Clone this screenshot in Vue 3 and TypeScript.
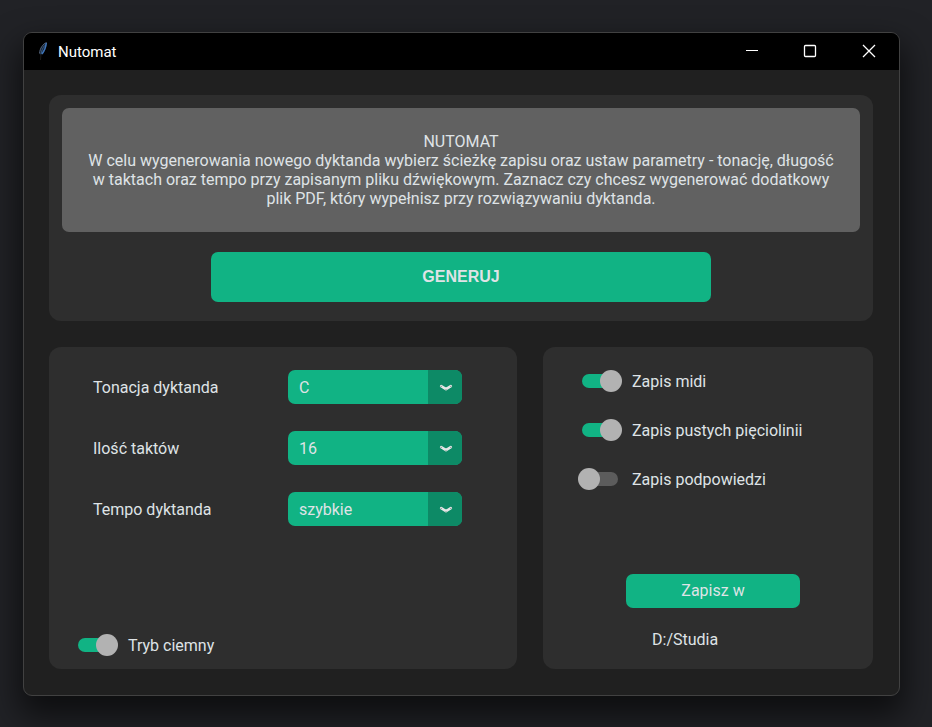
<script setup lang="ts">
import { reactive, ref } from 'vue'

interface Picker {
  id: string
  label: string
  value: string
  options: string[]
}

interface Toggle {
  id: string
  label: string
  on: boolean
}

const pickers = reactive<Picker[]>([
  { id: 'key', label: 'Tonacja dyktanda', value: 'C', options: ['C', 'G', 'D', 'F'] },
  { id: 'bars', label: 'Ilość taktów', value: '16', options: ['8', '16', '32'] },
  { id: 'tempo', label: 'Tempo dyktanda', value: 'szybkie', options: ['wolne', 'średnie', 'szybkie'] },
])

const toggles = reactive<Toggle[]>([
  { id: 'midi', label: 'Zapis midi', on: true },
  { id: 'staves', label: 'Zapis pustych pięciolinii', on: true },
  { id: 'hints', label: 'Zapis podpowiedzi', on: false },
])

const dark = ref(true)
const path = ref('D:/Studia')
</script>

<template>
  <div class="desktop">
    <main class="window">
      <header class="titlebar">
        <svg class="feather" viewBox="0 0 16 20" aria-hidden="true">
          <path d="M11 1C7.500 2.500 4 6 3.500 10.500L4 14.500C8 12.500 10.500 8 11 1Z" fill="#14202f" />
          <path d="M10.500 1.500C7 3 4 7 3.500 12.500" fill="none" stroke="#56647a" stroke-width="1" />
          <path d="M10.300 2C9.800 6.500 8 10.500 6 13" fill="none" stroke="#3f74b8" stroke-width="1.500" />
          <path d="M8.500 4.500C6.500 7.500 5.500 10 5 13" fill="none" stroke="#456f9f" stroke-width="0.800" />
          <path d="M5 13L4.500 19" fill="none" stroke="#1c1c1c" stroke-width="1" />
        </svg>
        <h1 class="title">Nutomat</h1>
        <div class="controls">
          <button class="control" type="button" aria-label="Minimalizuj">
            <svg viewBox="0 0 14 14"><path d="M1 6.500H13" /></svg>
          </button>
          <button class="control" type="button" aria-label="Maksymalizuj">
            <svg viewBox="0 0 14 14"><rect x="1.500" y="1.500" width="11" height="11" rx="1" stroke-width="1.300" /></svg>
          </button>
          <button class="control" type="button" aria-label="Zamknij">
            <svg viewBox="0 0 14 14"><path d="M2 1L14 13M14 1L2 13" stroke-width="1.300" /></svg>
          </button>
        </div>
      </header>

      <div class="content">
        <section class="panel intro">
          <div class="message">
            <p>NUTOMAT</p>
            <p>
              W celu wygenerowania nowego dyktanda wybierz ścieżkę zapisu oraz ustaw parametry - tonację, długość
              w taktach oraz tempo przy zapisanym pliku dźwiękowym. Zaznacz czy chcesz wygenerować dodatkowy
              plik PDF, który wypełnisz przy rozwiązywaniu dyktanda.
            </p>
          </div>
          <button class="button generate" type="button">GENERUJ</button>
        </section>

        <div class="columns">
          <section class="panel settings">
            <div class="pickers">
              <div v-for="p in pickers" :key="p.id" class="row">
                <label :for="p.id">{{ p.label }}</label>
                <div class="picker">
                  <select :id="p.id" v-model="p.value">
                    <option v-for="o in p.options" :key="o">{{ o }}</option>
                  </select>
                  <span class="drop">
                    <svg viewBox="0 0 14 8" aria-hidden="true">
                      <path class="outer" d="M2.200 2.200L7 5.200L11.800 2.200" />
                      <circle cx="2.200" cy="2.400" r="0.700" />
                      <circle cx="11.800" cy="2.400" r="0.700" />
                      <circle cx="7" cy="5.600" r="0.700" />
                    </svg>
                  </span>
                </div>
              </div>
            </div>
            <label class="toggle">
              <input v-model="dark" type="checkbox" role="switch" />
              <span>Tryb ciemny</span>
            </label>
          </section>

          <section class="panel saving">
            <div class="toggles">
              <label v-for="t in toggles" :key="t.id" class="toggle">
                <input v-model="t.on" type="checkbox" role="switch" />
                <span>{{ t.label }}</span>
              </label>
            </div>
            <div class="target">
              <button class="button save" type="button">Zapisz w</button>
              <output class="path">{{ path }}</output>
            </div>
          </section>
        </div>
      </div>
    </main>
  </div>
</template>

<style>
body {
  background: #212226;
}
</style>

<style scoped>
* {
  box-sizing: border-box;
}

.desktop {
  display: flex;
  min-height: 100vh;
  padding: 32px 32px 31px 23px;
  overflow: hidden;
  background: #212226;
  color: #dfe3e6;
  font: 16px/19px Roboto, 'Liberation Sans', sans-serif;
}

.window {
  display: flex;
  flex: 1;
  flex-direction: column;
  overflow: hidden;
  border: 1px solid #414141;
  border-radius: 9px;
  background: #202020;
  box-shadow: 0 16px 32px 4px rgb(0 0 0 / 60%);
}

.titlebar {
  display: flex;
  align-items: center;
  height: 37px;
  padding: 0 2px 1px 12px;
  background: #000;
}

.feather {
  width: 16px;
  height: 20px;
}

.title {
  flex: 1;
  margin: 0;
  padding: 2px 0 0 6px;
  color: #fff;
  font: 15px/20px Roboto, 'Liberation Sans', sans-serif;
}

.controls {
  display: flex;
}

.control {
  display: grid;
  width: 58px;
  height: 36px;
  padding: 0;
  border: 0;
  background: none;
  place-items: center;
}

.control svg {
  width: 14px;
  height: 14px;
  overflow: visible;
  fill: none;
  stroke: #fff;
}

.content {
  display: flex;
  flex: 1;
  flex-direction: column;
  gap: 26px;
  padding: 25px 26px 26px 25px;
}

.panel {
  border-radius: 12px;
  background: #2e2e2e;
}

.intro {
  display: flex;
  flex-direction: column;
  align-items: center;
  gap: 20px;
  padding: 13px 13px 19px;
}

.message {
  align-self: stretch;
  padding: 24px;
  border-radius: 7px;
  background: #616161;
  text-align: center;
}

.message p {
  margin: 0;
}

.button {
  padding: 0 0 2px;
  border: 0;
  border-radius: 7px;
  background: #11b384;
  color: #dfe3e6;
  font: inherit;
}

.generate {
  width: 500px;
  max-width: 100%;
  height: 50px;
  font-family: 'Liberation Sans', Arial, sans-serif;
  font-weight: 700;
}

.columns {
  display: grid;
  flex: 1;
  grid-template-columns: 468fr 330fr;
  gap: 26px;
}

.settings,
.saving {
  display: flex;
  flex-direction: column;
  justify-content: space-between;
}

.settings {
  padding: 23px 29px 13px;
}

.pickers {
  display: grid;
  gap: 27px;
}

.row {
  display: grid;
  grid-template-columns: 155px 174px;
  align-items: center;
  gap: 40px;
  padding-left: 15px;
}

.picker {
  display: grid;
  grid-template-columns: 1fr 34px;
  height: 34px;
  overflow: hidden;
  border-radius: 7px;
  background: #11b384;
}

.picker select {
  grid-area: 1 / 1 / 2 / 3;
  padding: 0 40px 0 11px;
  border: 0;
  appearance: none;
  background: none;
  color: inherit;
  font: inherit;
}

.drop {
  display: grid;
  grid-area: 1 / 2;
  padding: 2px 0 0 2px;
  background: #0d8a66;
  pointer-events: none;
  place-items: center;
}

.drop svg {
  width: 14px;
  height: 8px;
  fill: #8a9a94;
}

.drop .outer {
  fill: none;
  stroke: #e3e6e6;
  stroke-linecap: round;
  stroke-linejoin: round;
  stroke-width: 2.600;
}

.toggle {
  display: flex;
  align-items: center;
  gap: 10px;
}

.toggle input {
  display: grid;
  align-items: center;
  width: 44px;
  height: 22px;
  margin: 0;
  padding: 0 4px;
  appearance: none;
}

.toggle input::before,
.toggle input::after {
  grid-area: 1 / 1;
  content: '';
}

.toggle input::before {
  height: 14px;
  border-radius: 7px;
  background: #5c5c5c;
}

.toggle input::after {
  justify-self: start;
  width: 22px;
  height: 22px;
  margin: 0 -4px;
  border-radius: 50%;
  background: #b2b2b2;
}

.toggle input:checked::before {
  background: #11b384;
}

.toggle input:checked::after {
  justify-self: end;
}

.settings > .toggle {
  margin-left: -4px;
}

.saving {
  padding: 23px 35px 20px;
}

.toggles {
  display: grid;
  gap: 27px;
}

.target {
  display: grid;
  gap: 22px;
  width: 174px;
  margin-left: 48px;
}

.save {
  height: 34px;
}

.path {
  padding-left: 26px;
}
</style>
